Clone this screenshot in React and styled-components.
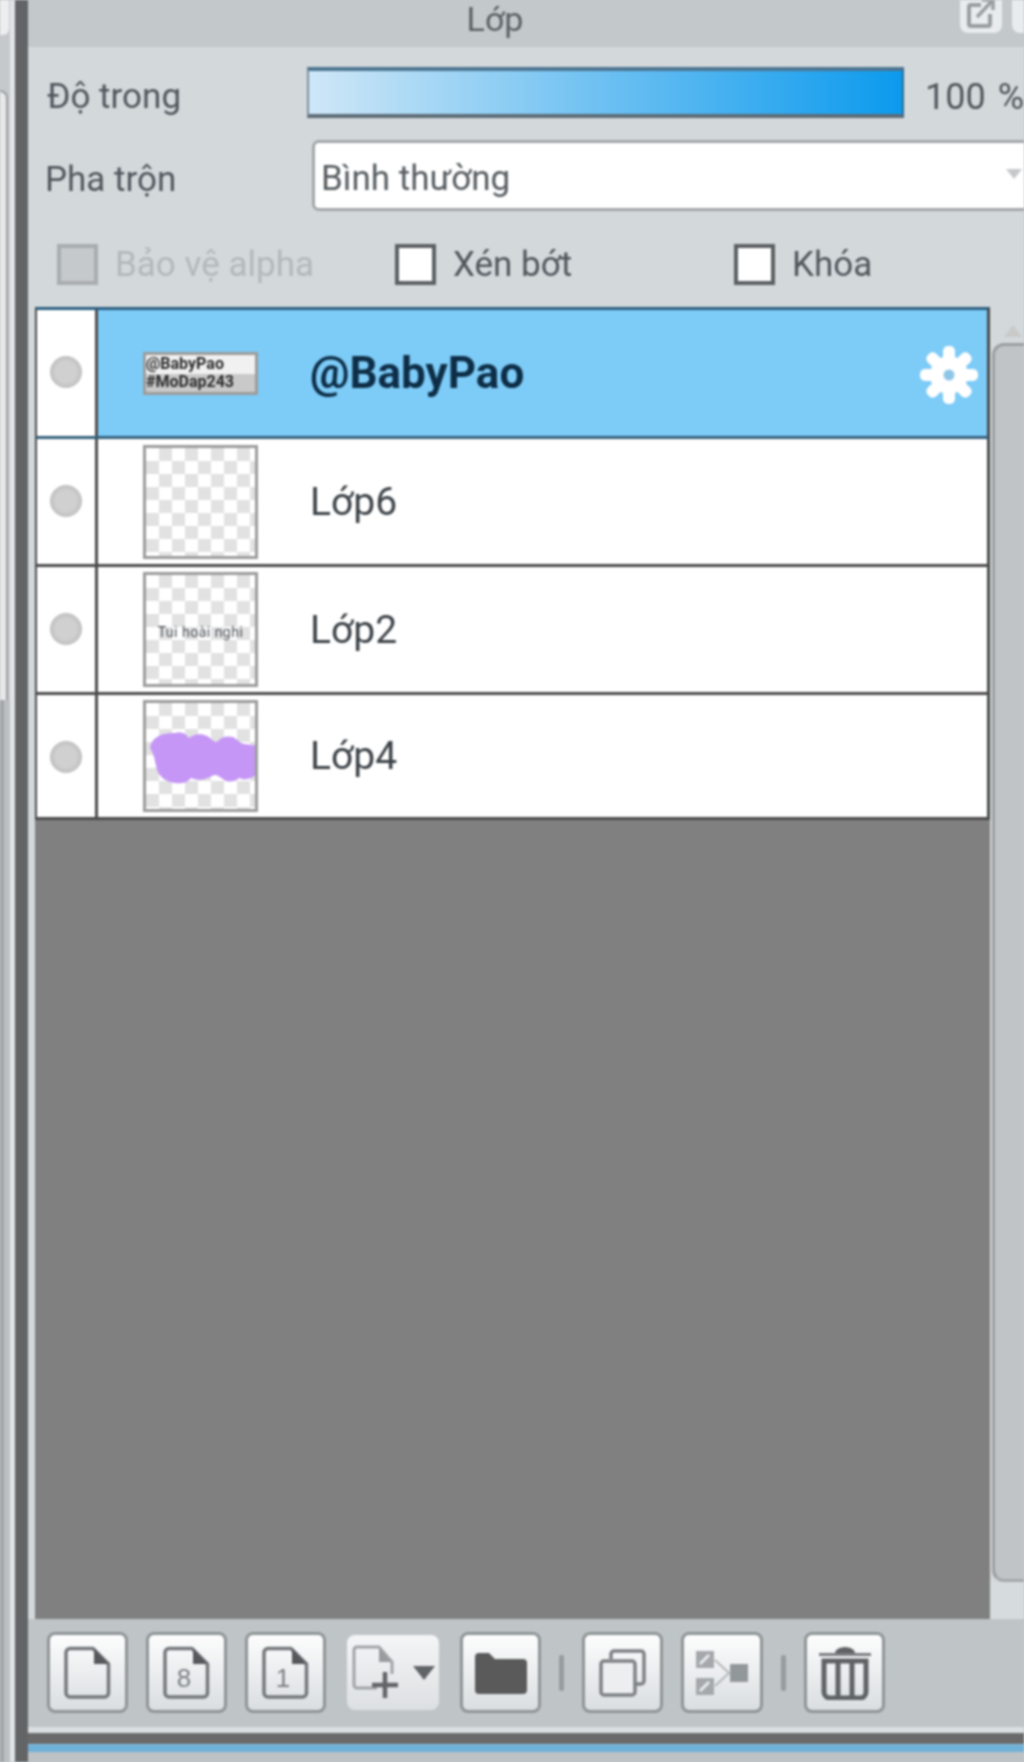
import React from "react";
import styled, { createGlobalStyle } from "styled-components";

const Global = createGlobalStyle`
  html, body { margin: 0; padding: 0; background: #c3c8cb; }
  * { box-sizing: border-box; }
`;

const Screen = styled.div`
  width: 1024px;
  height: 1762px;
  display: flex;
  overflow: hidden;
  background: #c9ced1;
  font-family: Roboto, "Open Sans", sans-serif;
  color: #4f565b;
  filter: blur(0.9px);
`;

const LeftRail = styled.div`
  width: 15px;
  flex: none;
  display: flex;
  flex-direction: column;
  background: linear-gradient(90deg, #c6c9cb 0 10px, #e1e5e7 10px 15px);
`;
const RailCap = styled.div`
  width: 9px;
  height: 35px;
  background: #eceeef;
  border-bottom-right-radius: 6px;
`;
const RailPane = styled.div`
  width: 8px;
  height: 610px;
  margin-top: 55px;
  border-top: 2px solid #9da1a3;
  border-right: 2px solid #9da1a3;
  border-top-right-radius: 8px;
  background: #e6e8e9;
`;
const RailLower = styled.div`
  flex: 1;
  background: linear-gradient(90deg, #a3a5a6 0 4px, #bcc0c2 4px 10px, #e1e5e7 10px 15px);
`;
const Divider = styled.div`
  width: 13px;
  flex: none;
  background: #626466;
`;

const Panel = styled.div`
  flex: 1;
  min-width: 0;
  display: flex;
  flex-direction: column;
  background: #d3d8db;
  overflow: hidden;
`;

const TitleBar = styled.div`
  height: 47px;
  flex: none;
  display: flex;
  align-items: flex-start;
  background: #c3c8cb;
  position: relative;
`;
const TitleText = styled.div`
  width: 934px;
  text-align: center;
  font-size: 34px;
  line-height: 38px;
  color: #5a6165;
`;
const TitleButton = styled.div`
  position: absolute;
  top: -8px;
  left: ${(p) => p.$left}px;
  width: 42px;
  height: 41px;
  background: #e9ecee;
  border-radius: 8px;
  display: flex;
  align-items: center;
  justify-content: center;
`;

const OpacityRow = styled.div`
  height: 51px;
  margin-top: 20px;
  display: flex;
  align-items: center;
  flex: none;
`;
const Label = styled.div`
  width: ${(p) => p.$w}px;
  padding-left: ${(p) => p.$pad}px;
  padding-top: 9px;
  flex: none;
  font-size: 35px;
  line-height: 40px;
  color: #50575c;
  white-space: nowrap;
`;
const SliderBar = styled.div`
  width: 597px;
  height: 51px;
  flex: none;
  border-top: 4px solid #4d7591;
  border-bottom: 4px solid #5d6c77;
  border-left: 2px solid #7d8f9b;
  border-right: 2px solid #2c6c97;
  background: linear-gradient(90deg, #cfe7f7 0%, #6cc0f2 50%, #0c9aee 100%);
`;
const Percent = styled.div`
  margin-left: 21px;
  padding-top: 9px;
  font-size: 36px;
  word-spacing: 3px;
  color: #50575c;
  white-space: nowrap;
`;

const BlendRow = styled.div`
  height: 71px;
  margin-top: 22px;
  display: flex;
  align-items: center;
  flex: none;
`;
const Combo = styled.div`
  width: 730px;
  height: 71px;
  flex: none;
  padding: 6px 0 0 6px;
  display: flex;
  align-items: center;
  background: #fff;
  border: 3px solid #a3a7aa;
  border-radius: 7px;
  font-size: 35px;
  color: #565c60;
  position: relative;
`;
const ComboArrow = styled.div`
  position: absolute;
  left: 691px;
  top: 26px;
  width: 0;
  height: 0;
  border-left: 8px solid transparent;
  border-right: 8px solid transparent;
  border-top: 10px solid #c5c8cb;
`;

const CheckRow = styled.div`
  height: 40px;
  margin-top: 33px;
  flex: none;
  display: flex;
  align-items: center;
  padding-left: 29px;
`;
const CheckItem = styled.div`
  width: ${(p) => p.$w}px;
  flex: none;
  display: flex;
  align-items: center;
  gap: 17px;
  font-size: 35px;
  color: ${(p) => (p.$off ? "#b3b8bb" : "#50575c")};
  white-space: nowrap;
`;
const CheckBox = styled.div`
  width: 41px;
  height: 41px;
  flex: none;
  border: 4px solid ${(p) => (p.$off ? "#a9adb0" : "#5c6063")};
  background: ${(p) => (p.$off ? "#c5c9cc" : "#fff")};
`;

const ListArea = styled.div`
  flex: 1;
  margin-top: 23px;
  margin-left: 7px;
  min-height: 0;
  display: flex;
`;
const LayerList = styled.div`
  width: 955px;
  flex: none;
  background: #808080;
  display: flex;
  flex-direction: column;
`;
const Row = styled.div`
  height: ${(p) => p.$h}px;
  flex: none;
  display: flex;
  background: #fff;
  border-left: 2px solid #4a4a4a;
  border-right: 3px solid #4a4a4a;
  border-top: ${(p) => (p.$first ? "3px solid #2c5f80" : "none")};
  border-bottom: 3px solid ${(p) => (p.$active ? "#35607c" : "#4b4b4b")};
`;
const EyeCell = styled.div`
  width: 61px;
  flex: none;
  border-right: 3px solid #4d4d4d;
  background: #fff;
  display: flex;
  justify-content: center;
  padding-top: ${(p) => p.$top}px;
`;
const EyeDot = styled.div`
  width: 32px;
  height: 32px;
  border-radius: 50%;
  background: radial-gradient(circle, #d0d0d0 0 45%, #bfbfbf 70%, #c8c8c8 100%);
`;
const RowBody = styled.div`
  flex: 1;
  display: flex;
  align-items: center;
  padding-left: 45px;
  background: ${(p) => (p.$active ? "#7dcbf7" : "#fff")};
  position: relative;
`;
const Thumb = styled.div`
  width: 115px;
  height: ${(p) => p.$h}px;
  flex: none;
  border: 3px solid #9c9c9c;
  background: conic-gradient(#e2e2e2 25%, #fff 0 50%, #e2e2e2 0 75%, #fff 0) 0 0 / 26px 26px;
  display: flex;
  flex-direction: column;
  align-items: center;
  justify-content: center;
  overflow: hidden;
  position: relative;
`;
const ThumbBanner = styled.div`
  width: 100%;
  height: 100%;
  background: linear-gradient(180deg, #f1f1f1 0 50%, #c9c9c9 50% 100%);
  color: #2b2b2b;
  font-size: 16px;
  line-height: 18px;
  font-weight: 700;
  white-space: nowrap;
`;
const ThumbNote = styled.div`
  font-size: 14px;
  letter-spacing: 0.5px;
  color: #4a4f55;
  white-space: nowrap;
  margin-top: 4px;
`;
const LayerName = styled.div`
  margin-left: 52px;
  font-size: ${(p) => (p.$bold ? 44 : 39)}px;
  font-weight: ${(p) => (p.$bold ? 700 : 400)};
  color: ${(p) => (p.$bold ? "#0e2e47" : "#3c4247")};
  white-space: nowrap;
`;
const GearSlot = styled.div`
  position: absolute;
  right: 8px;
  top: 35px;
  width: 60px;
  height: 60px;
`;

const ScrollBar = styled.div`
  flex: 1;
  display: flex;
  flex-direction: column;
  background: #d3d8db;
`;
const ScrollCap = styled.div`
  height: ${(p) => p.$h}px;
  flex: none;
  position: relative;
  background: ${(p) => p.$bg};
`;
const ScrollArrow = styled.div`
  position: absolute;
  left: 14px;
  top: 18px;
  width: 0;
  height: 0;
  border-left: 9px solid transparent;
  border-right: 9px solid transparent;
  border-bottom: 12px solid #c9c9c9;
`;
const ScrollHandle = styled.div`
  flex: 1;
  margin-left: 2px;
  background: #c1c4c6;
  border-left: 3px solid #9b9fa2;
  border-top: 3px solid #9b9fa2;
  border-bottom: 3px solid #a5a9ac;
  border-top-left-radius: 12px;
  border-bottom-left-radius: 12px;
`;

const Toolbar = styled.div`
  height: 114px;
  flex: none;
  display: flex;
  align-items: flex-start;
  gap: 18px;
  padding: 13px 0 0 19px;
  background: #bfc4c7;
  border-bottom: 6px solid #dadfe1;
`;
const ToolButton = styled.div`
  width: ${(p) => p.$w || 81}px;
  height: 81px;
  flex: none;
  display: flex;
  align-items: center;
  justify-content: center;
  gap: 12px;
  border-radius: ${(p) => (p.$flat ? 11 : 8)}px;
  border: 3px solid ${(p) => (p.$flat ? "transparent" : "#8f9497")};
  background: ${(p) =>
    p.$flat
      ? "linear-gradient(180deg, #f4f5f6 0%, #dde0e2 100%) padding-box"
      : "linear-gradient(180deg, #fdfdfd 0%, #dadee0 100%)"};
`;
const ToolSep = styled.div`
  width: 5px;
  height: 36px;
  margin-top: 23px;
  flex: none;
  border-radius: 2px;
  background: #979c9f;
`;
const BottomDark = styled.div`
  height: 11px;
  flex: none;
  background: #6a6a6a;
`;
const BottomBlue = styled.div`
  height: 8px;
  flex: none;
  background: #6fb1d7;
  border-top: 1px solid #8cc2e0;
`;
const BottomTail = styled.div`
  height: 10px;
  flex: none;
  background: #bdc2c5;
`;

const Doc = ({ w = 47, h = 54, stroke = "#74787b", children }) => (
  <svg width={w} height={h} viewBox="0 0 47 54" fill="none">
    <path d="M6 2.5H29L44.5 18V47a4 4 0 0 1-4 4H6a4 4 0 0 1-4-4V6.5a4 4 0 0 1 4-4Z" stroke={stroke} strokeWidth="3.5" strokeLinejoin="round" />
    <path d="M30 2.5L44.5 18H30Z" fill="#55585a" />
    {children}
  </svg>
);

const DocNumber = ({ n }) => (
  <text x="21" y="41" textAnchor="middle" fontSize="26" fontFamily="Liberation Sans, sans-serif" fill="#7d8184">{n}</text>
);

const NewLayerIcon = () => (
  <svg width="50" height="56" viewBox="0 0 50 56" fill="none">
    <path d="M26 43H6a3 3 0 0 1-3-3V5a3 3 0 0 1 3-3h22l13 15v12" stroke="#a0a4a7" strokeWidth="3" />
    <path d="M28 3l12 14H28Z" fill="#989c9f" />
    <path d="M34 27v26M21 40h26" stroke="#626568" strokeWidth="4.5" />
  </svg>
);
const Caret = () => (
  <svg width="22" height="14" viewBox="0 0 22 14"><path d="M0 0h22L11 14Z" fill="#616466" /></svg>
);
const FolderIcon = () => (
  <svg width="52" height="42" viewBox="0 0 52 42"><path d="M0 5a4 4 0 0 1 4-4h10l6 6h28a4 4 0 0 1 4 4v27a4 4 0 0 1-4 4H4a4 4 0 0 1-4-4Z" fill="#5a5a5a" /></svg>
);
const CopyIcon = () => (
  <svg width="47" height="48" viewBox="0 0 47 48" fill="none">
    <path d="M12 10V5a3 3 0 0 1 3-3h27a3 3 0 0 1 3 3v27a3 3 0 0 1-3 3h-6" stroke="#7d8184" strokeWidth="3.5" />
    <rect x="2" y="12" width="34" height="34" rx="3" stroke="#7d8184" strokeWidth="3.5" fill="#eceeef" />
  </svg>
);
const MergeIcon = () => (
  <svg width="54" height="46" viewBox="0 0 54 46" fill="none">
    <rect x="1" y="1" width="18" height="17" fill="#a4a8ab" />
    <rect x="1" y="28" width="18" height="17" fill="#a4a8ab" />
    <path d="M5 14l9-9M5 41l9-9" stroke="#eef0f1" strokeWidth="2.5" />
    <path d="M20 10l14 13-14 13" stroke="#b4b8ba" strokeWidth="2" />
    <rect x="35" y="14" width="18" height="18" fill="#92979a" />
  </svg>
);
const TrashIcon = () => (
  <svg width="54" height="54" viewBox="0 0 54 54" fill="none">
    <path d="M17 7a10 6 0 0 1 20 0Z" fill="#5f6265" />
    <path d="M1 8.5h52" stroke="#7a7e81" strokeWidth="3" />
    <path d="M6 15h42v31a6 6 0 0 1-6 6H12a6 6 0 0 1-6-6Z" stroke="#5f6265" strokeWidth="5" />
    <path d="M20 17v33M34 17v33" stroke="#5f6265" strokeWidth="5" />
  </svg>
);
const ExternalIcon = () => (
  <svg width="28" height="30" viewBox="0 0 28 30" fill="none">
    <path d="M14 7H4a2 2 0 0 0-2 2v17a2 2 0 0 0 2 2h17a2 2 0 0 0 2-2V16" stroke="#9a9ea1" strokeWidth="4" />
    <path d="M10 19L25 3M15 2h11v10" stroke="#9a9ea1" strokeWidth="3.5" />
  </svg>
);
const Gear = () => (
  <svg width="60" height="60" viewBox="0 0 60 60">
    {[0, 45, 90, 135].map((a) => (
      <rect key={a} x="24" y="1" width="12" height="58" rx="5" fill="#fff" transform={`rotate(${a} 30 30)`} />
    ))}
    <circle cx="30" cy="30" r="19" fill="#fff" />
    <circle cx="30" cy="30" r="5.5" fill="#8fc6e8" />
  </svg>
);
const PurpleBlob = () => (
  <svg width="109" height="56" viewBox="0 0 109 56" style={{ position: "absolute", left: 3, top: 27 }}>
    <path d="M1 18C3 6 14 3 26 3c6-2 10 0 14 5 5-4 12-5 18-2 4 2 6 6 10 6 5-6 14-7 19-3 4 3 6 5 9 5l13 2v27c-6 6-13 8-19 5-4 4-11 5-16 1-4-2-6-6-11-3-7 4-14 5-21 2-4 5-10 6-16 5-8-1-15-5-18-13-2-7-2-14-7-22Z" fill="#c596f6" />
  </svg>
);

const layers = [
  { name: "@BabyPao", h: 132, eye: 46, thumb: 43, active: true },
  { name: "Lớp6", h: 128, eye: 46, thumb: 114 },
  { name: "Lớp2", h: 128, eye: 46, thumb: 115, note: "Tui hoài nghi" },
  { name: "Lớp4", h: 125, eye: 46, thumb: 112, blob: true },
];

export default function App() {
  return (
    <Screen>
      <Global />
      <LeftRail>
        <RailCap />
        <RailPane />
        <RailLower />
      </LeftRail>
      <Divider />
      <Panel>
        <TitleBar>
          <TitleText>Lớp</TitleText>
          <TitleButton $left={932}><ExternalIcon /></TitleButton>
          <TitleButton $left={984} />
        </TitleBar>
        <OpacityRow>
          <Label $w={279} $pad={19}>Độ trong</Label>
          <SliderBar />
          <Percent>100 %</Percent>
        </OpacityRow>
        <BlendRow>
          <Label $w={284} $pad={17}>Pha trộn</Label>
          <Combo>
            Bình thường
            <ComboArrow />
          </Combo>
        </BlendRow>
        <CheckRow>
          <CheckItem $w={338} $off><CheckBox $off />Bảo vệ alpha</CheckItem>
          <CheckItem $w={339}><CheckBox />Xén bớt</CheckItem>
          <CheckItem><CheckBox />Khóa</CheckItem>
        </CheckRow>
        <ListArea>
          <LayerList>
            {layers.map((l, i) => (
              <Row key={l.name} $h={l.h} $first={i === 0} $active={l.active}>
                <EyeCell $top={l.eye}><EyeDot /></EyeCell>
                <RowBody $active={l.active}>
                  <Thumb $h={l.thumb}>
                    {l.active && <ThumbBanner>@BabyPao<br />#MoDap243</ThumbBanner>}
                    {l.note && <ThumbNote>{l.note}</ThumbNote>}
                    {l.blob && <PurpleBlob />}
                  </Thumb>
                  <LayerName $bold={l.active}>{l.name}</LayerName>
                  {l.active && <GearSlot><Gear /></GearSlot>}
                </RowBody>
              </Row>
            ))}
          </LayerList>
          <ScrollBar>
            <ScrollCap $h={36} $bg="#d3d8db"><ScrollArrow /></ScrollCap>
            <ScrollHandle />
            <ScrollCap $h={37} $bg="#d6dbdd" />
          </ScrollBar>
        </ListArea>
        <Toolbar>
          <ToolButton><Doc /></ToolButton>
          <ToolButton><Doc><DocNumber n="8" /></Doc></ToolButton>
          <ToolButton><Doc><DocNumber n="1" /></Doc></ToolButton>
          <ToolButton $w={98} $flat><NewLayerIcon /><Caret /></ToolButton>
          <ToolButton><FolderIcon /></ToolButton>
          <ToolSep />
          <ToolButton><CopyIcon /></ToolButton>
          <ToolButton $w={82}><MergeIcon /></ToolButton>
          <ToolSep />
          <ToolButton><TrashIcon /></ToolButton>
        </Toolbar>
        <BottomDark />
        <BottomBlue />
        <BottomTail />
      </Panel>
    </Screen>
  );
}
